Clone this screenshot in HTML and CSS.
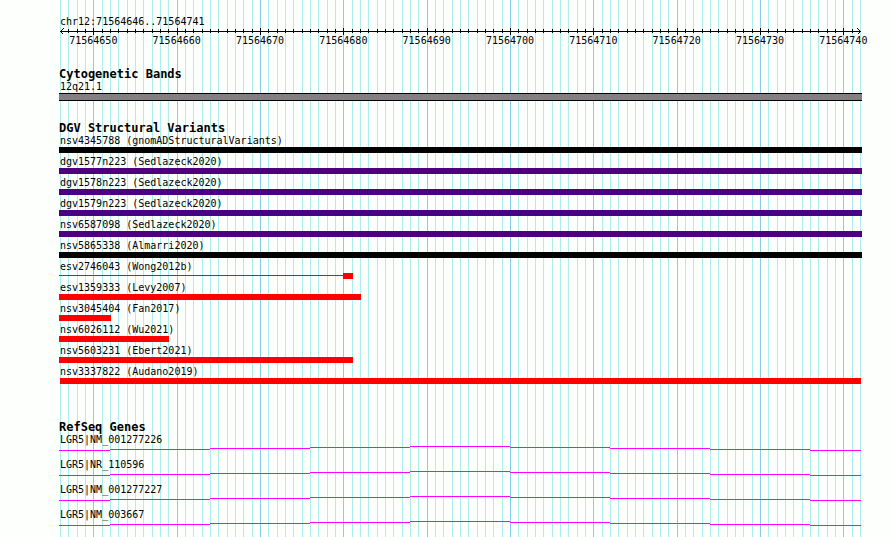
FILE: index.html
```html
<!DOCTYPE html>
<html lang="en">
<head>
<meta charset="utf-8">
<title>chr12:71564646..71564741</title>
<link rel="stylesheet" href="styles.css">
</head>
<body>
<main class="browser">
  <svg class="grid" id="grid" aria-hidden="true"></svg>

  <header class="ruler">
    <p class="label">chr12:71564646..71564741</p>
    <svg class="axis" id="axis">
      <rect x="0" y="3" width="100%" height="1"/>
      <path class="arrow" d="M3.5 0.5 L0.5 3.5 L3.5 6.5"/>
      <svg class="arrow-end" x="100%"><path class="arrow" d="M-2.5 0.5 L0.5 3.5 L-2.5 6.5"/></svg>
    </svg>
  </header>

  <section class="track bands">
    <h2>Cytogenetic Bands</h2>
    <p class="label">12q21.1</p>
    <div class="band"></div>
  </section>

  <section class="track variants">
    <h2>DGV Structural Variants</h2>
    <div class="variant"><p class="label">nsv4345788 (gnomADStructuralVariants)</p><div class="bar black"></div></div>
    <div class="variant"><p class="label">dgv1577n223 (Sedlazeck2020)</p><div class="bar indigo"></div></div>
    <div class="variant"><p class="label">dgv1578n223 (Sedlazeck2020)</p><div class="bar indigo"></div></div>
    <div class="variant"><p class="label">dgv1579n223 (Sedlazeck2020)</p><div class="bar indigo"></div></div>
    <div class="variant"><p class="label">nsv6587098 (Sedlazeck2020)</p><div class="bar indigo"></div></div>
    <div class="variant"><p class="label">nsv5865338 (Almarri2020)</p><div class="bar black"></div></div>
    <div class="variant"><p class="label">esv2746043 (Wong2012b)</p><div class="split"><div class="thread" style="width:35.37%"></div><div class="bar red" style="width:1.24%"></div></div></div>
    <div class="variant"><p class="label">esv1359333 (Levy2007)</p><div class="bar red" style="width:37.61%"></div></div>
    <div class="variant"><p class="label">nsv3045404 (Fan2017)</p><div class="bar red" style="width:6.48%"></div></div>
    <div class="variant"><p class="label">nsv6026112 (Wu2021)</p><div class="bar red" style="width:13.7%"></div></div>
    <div class="variant"><p class="label">nsv5603231 (Ebert2021)</p><div class="bar red" style="width:36.61%"></div></div>
    <div class="variant"><p class="label">nsv3337822 (Audano2019)</p><div class="bar red inset"></div></div>
  </section>

  <section class="track genes">
    <h2>RefSeq Genes</h2>
    <div class="gene"><p class="label">LGR5|NM_001277226</p><svg class="intron" viewBox="0 0 803 5" preserveAspectRatio="none"><path id="hat" d="M0 4h51v1h-51zM51 3h100v1h-100zM151 2h100v1h-100zM251 1h100v1h-100zM351 0h100v1h-100zM451 1h100v1h-100zM551 2h100v1h-100zM651 3h100v1h-100zM751 4h51v1h-51z"/></svg></div>
    <div class="gene"><p class="label">LGR5|NR_110596</p><svg class="intron" viewBox="0 0 803 5" preserveAspectRatio="none"><use href="#hat"/></svg></div>
    <div class="gene"><p class="label">LGR5|NM_001277227</p><svg class="intron" viewBox="0 0 803 5" preserveAspectRatio="none"><use href="#hat"/></svg></div>
    <div class="gene"><p class="label">LGR5|NM_003667</p><svg class="intron" viewBox="0 0 803 5" preserveAspectRatio="none"><use href="#hat"/></svg></div>
  </section>
</main>
<script src="ruler.js"></script>
</body>
</html>
```
FILE: ruler.js
```js
const SVG = "http://www.w3.org/2000/svg";
const START = 71564646;
const BASES = 96;
const grid = document.getElementById("grid");
const axis = document.getElementById("axis");

function add(parent, name, attrs) {
  const node = document.createElementNS(SVG, name);
  for (const key in attrs) node.setAttribute(key, attrs[key]);
  parent.appendChild(node);
  return node;
}

// One grid line and one tick per base, stronger every ten bases
for (let i = 0; i <= BASES; i++) {
  const x = (i / BASES) * 100 + "%";
  const major = (START + i) % 10 === 0;
  add(grid, "rect", { x, y: 0, width: 1, height: "100%", class: major ? "major" : "minor" });
  if (i > 0 && i < BASES) {
    add(axis, "rect", { x, y: major ? 0 : 1, width: 1, height: major ? 7 : 4 });
  }
  if (major) {
    add(axis, "text", { x, y: 16, "text-anchor": "middle" }).textContent = START + i;
  }
}
```
FILE: styles.css
```css
* {
  box-sizing: border-box;
}

body {
  margin: 0;
  background: #fdfffc;
  color: #000;
  font: 10px/12px "DejaVu Sans Mono", monospace;
}

h2,
p {
  margin: 0;
}

h2 {
  margin-bottom: 2px;
  font-size: 12px;
  line-height: 10px;
}

svg {
  display: block;
}

.browser {
  position: relative;
  min-height: 100vh;
  padding: 16px 28px 0 59px;
}

.grid {
  position: absolute;
  top: 0;
  left: 60px;
  width: calc(100% - 90px);
  height: 100%;
  overflow: visible;
  shape-rendering: crispEdges;
}

.minor {
  fill: #afeeee;
}

.major {
  fill: #87ceeb;
}

.ruler,
.track {
  position: relative;
}

.label {
  padding-left: 1px;
  white-space: nowrap;
}

.axis {
  width: calc(100% - 3px);
  height: 20px;
  margin-left: 1px;
  overflow: visible;
  shape-rendering: crispEdges;
}

.arrow {
  fill: none;
  stroke: #000;
}

.arrow-end {
  overflow: visible;
}

.bands {
  margin-top: 21px;
}

.band {
  height: 8px;
  border: solid #000;
  border-width: 1px 0;
  background: #847f83;
}

.variants {
  margin-top: 22px;
}

.variant {
  height: 21px;
}

.bar {
  height: 6px;
}

.black {
  background: #000;
}

.indigo {
  background: #4b0082;
}

.red {
  background: #f00;
}

.inset {
  margin: 0 1px;
}

.split {
  display: flex;
}

.thread {
  height: 1px;
  margin-top: 2px;
  background: #f00;
}

.genes {
  margin-top: 35px;
}

.gene {
  height: 25px;
}

.intron {
  width: 100%;
  height: 5px;
  fill: #f0f;
  shape-rendering: crispEdges;
}
```
